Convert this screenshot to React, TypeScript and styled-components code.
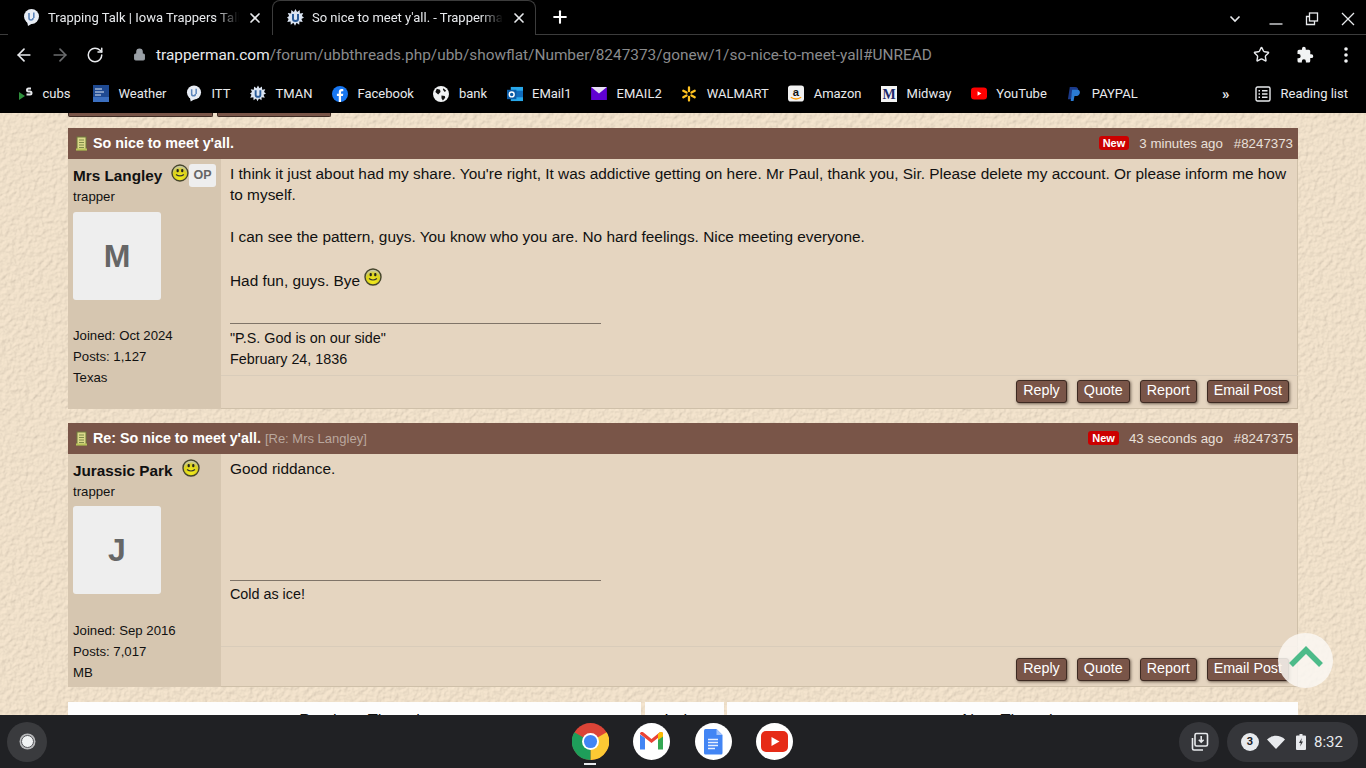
import styled, { createGlobalStyle } from 'styled-components';
import { ReactNode } from 'react';
import { ArrowLeft, ArrowRight, RotateCw, Star, Lock, X, Plus } from 'lucide-react';

const texture = `url("data:image/svg+xml,%3Csvg xmlns='http://www.w3.org/2000/svg' width='320' height='320'%3E%3Cfilter id='n' x='0' y='0' width='100%25' height='100%25'%3E%3CfeTurbulence type='fractalNoise' baseFrequency='0.22' numOctaves='4' seed='7' stitchTiles='stitch'/%3E%3CfeDiffuseLighting lighting-color='%23ffffff' surfaceScale='0.9' diffuseConstant='1'%3E%3CfeDistantLight azimuth='45' elevation='68'/%3E%3C/feDiffuseLighting%3E%3C/filter%3E%3Crect width='320' height='320' filter='url(%23n)'/%3E%3C/svg%3E")`;

const GlobalStyle = createGlobalStyle`
  html, body {
    margin: 0;
    padding: 0;
    height: 100%;
    overflow: hidden;
    font-family: "Liberation Sans", Arial, sans-serif;
  }
`;

const Shell = styled.div`
  width: 1366px;
  height: 768px;
  display: flex;
  flex-direction: column;
  overflow: hidden;
  position: relative;
`;

/* browser chrome */
const TabStrip = styled.div`
  height: 35px;
  flex: none;
  box-sizing: border-box;
  background: #000;
  border-bottom: 1px solid #3c3c3c;
  display: flex;
  align-items: stretch;
  padding-left: 8px;
  font-family: Roboto, sans-serif;
`;

const Tab = styled.div<{ $active?: boolean }>`
  width: 264px;
  height: 36px;
  box-sizing: border-box;
  display: flex;
  align-items: center;
  gap: 8px;
  padding: 0 8px 1px 14px;
  background: #000;
  color: #e8eaed;
  font-size: 13px;
  border: ${(p) => (p.$active ? '1px solid #3c3c3c' : '1px solid transparent')};
  border-bottom: ${(p) => (p.$active ? '1px solid #000' : '1px solid transparent')};
  border-radius: 8px 8px 0 0;
`;

const TabTitle = styled.span`
  flex: 1;
  white-space: nowrap;
  overflow: hidden;
  mask-image: linear-gradient(to right, #000 88%, transparent 100%);
`;

const NewTab = styled.div`
  display: flex;
  align-items: center;
  margin-left: 14px;
  color: #fff;
`;

const WindowControls = styled.div`
  margin-left: auto;
  display: flex;
  align-items: center;
  gap: 22px;
  padding: 3px 11px 0 0;
`;

const WindowButton = styled.svg<{ $after?: number }>`
  width: 14px;
  height: 14px;
  fill: none;
  stroke: #e8eaed;
  stroke-width: 1.3;
  margin-right: ${(p) => p.$after ?? 0}px;
`;

const Toolbar = styled.div`
  height: 39px;
  flex: none;
  background: #000;
  display: flex;
  align-items: center;
  padding-left: 14px;
  color: #e8eaed;
  font-family: Roboto, sans-serif;
`;

const NavIcons = styled.div`
  display: flex;
  align-items: center;
  gap: 16px;
`;

const Url = styled.div`
  display: flex;
  align-items: center;
  margin-left: 29px;
  font-size: 15.39px;
  color: #8a8b8d;
  white-space: nowrap;
  b {
    font-weight: 400;
    color: #e8eaed;
  }
  svg {
    margin-right: 10px;
    color: #9aa0a6;
  }
`;

const ToolbarRight = styled.div`
  margin-left: auto;
  display: flex;
  align-items: center;
  gap: 26px;
  padding-right: 18px;
  svg:last-child {
    margin-left: 4px;
  }
`;

const Bookmarks = styled.div`
  height: 39px;
  flex: none;
  background: #000;
  display: flex;
  align-items: center;
  padding-left: 17px;
  gap: 19.5px;
  color: #e8eaed;
  font-size: 13px;
  font-family: Roboto, sans-serif;
`;

const Bookmark = styled.div`
  display: flex;
  align-items: center;
  gap: 9.5px;
  white-space: nowrap;
  &:first-child {
    margin-right: 3px;
  }
`;

const BookmarkIcon = styled.span`
  width: 16px;
  height: 17px;
  display: flex;
  align-items: center;
  justify-content: center;
`;

const BookmarksEnd = styled.div`
  margin-left: auto;
  display: flex;
  align-items: center;
  padding-right: 18px;
  gap: 10px;
`;

const More = styled.span`
  margin-right: 15px;
  font-size: 15px;
  font-weight: 700;
`;

/* forum page */
const Page = styled.main`
  flex: 1;
  min-height: 0;
  overflow: hidden;
  background-color: #f7e7d0;
  background-image: ${texture};
  background-blend-mode: multiply;
  padding: 0 68px;
  font-size: 15.4px;
  color: #111;
`;

const TopSliver = styled.div`
  display: flex;
  gap: 4px;
  height: 4px;
  margin-bottom: 11px;
`;

const SliverButton = styled.div<{ $width: number }>`
  width: ${(p) => p.$width}px;
  box-sizing: border-box;
  background: #795548;
  border: 1px solid #3d2a22;
  border-top: 0;
  border-radius: 0 0 2px 2px;
`;

const Post = styled.article`
  margin-bottom: 14px;
  background: #e5d5c0;
  box-shadow: inset -1px -1px 0 #cfc0a9;
`;

const PostHeader = styled.header`
  height: 31px;
  box-sizing: border-box;
  padding: 0 5px 0 7px;
  background: #795548;
  color: #fff;
  display: flex;
  align-items: center;
  font-size: 13.3px;
`;

const PostTitle = styled.strong`
  font-size: 14.3px;
  margin: 0 0 2px 5px;
`;

const ReplyTo = styled.span`
  color: #b9a79d;
  font-size: 13px;
  margin: 0 0 1px 4px;
`;

const NewBadge = styled.span`
  margin-left: auto;
  background: #cc0000;
  color: #fff;
  font-weight: 700;
  font-size: 11px;
  line-height: 14px;
  padding: 0 4px;
  border-radius: 3px;
  margin-top: -2px;
`;

const PostTime = styled.span`
  margin-left: 10px;
  color: #e9e0da;
`;

const PostNumber = styled.span`
  margin-left: 11px;
  color: #e9e0da;
`;

const PostBody = styled.div`
  display: flex;
`;

const Sidebar = styled.aside<{ $bottom: number }>`
  width: 153px;
  flex: none;
  box-sizing: border-box;
  padding: 4px 5px ${(p) => p.$bottom}px;
  background: #d6c6b0;
  font-size: 13.2px;
  line-height: 21px;
`;

const NameRow = styled.div`
  display: flex;
  align-items: flex-start;
  height: 23px;
  box-sizing: border-box;
  padding-top: 1px;
`;

const UserName = styled.strong`
  font-size: 15.3px;
  line-height: 24px;
  margin-right: 9px;
  white-space: nowrap;
`;

const OpBadge = styled.span`
  background: #eee;
  color: #666;
  font-weight: 700;
  font-size: 12.5px;
  line-height: 23px;
  width: 27px;
  text-align: center;
  border-radius: 3px;
`;

const Avatar = styled.div<{ $top: number }>`
  width: 88px;
  height: 88px;
  margin-top: ${(p) => p.$top}px;
  background: #eee;
  border-radius: 3px;
  color: #666;
  font-weight: 700;
  font-size: 32px;
  display: flex;
  align-items: center;
  justify-content: center;
`;

const UserStats = styled.div<{ $top: number }>`
  margin-top: ${(p) => p.$top}px;
`;

const PostMain = styled.div`
  flex: 1;
  min-width: 0;
  display: flex;
  flex-direction: column;
`;

const Message = styled.div<{ $height: number }>`
  height: ${(p) => p.$height}px;
  box-sizing: border-box;
  padding: 4px 9px 0;
  line-height: 21px;
`;

const MessageLine = styled.div<{ $after?: number }>`
  margin-bottom: ${(p) => p.$after ?? 0}px;
`;

const InlineSmiley = styled.span`
  svg {
    vertical-align: 0;
    margin-top: -4px;
  }
`;

const Signature = styled.div<{ $top: number }>`
  margin: 0 9px;
  width: 371px;
  border-top: 1px solid #7f7468;
  padding-top: ${(p) => p.$top}px;
  font-size: 14.35px;
  line-height: 21px;
  white-space: nowrap;
`;

const PostFooter = styled.footer<{ $top: number }>`
  margin-top: auto;
  border-top: 1px solid #d9ccba;
  display: flex;
  justify-content: flex-end;
  gap: 10px;
  padding: ${(p) => p.$top}px 9px 6px 0;
`;

const ActionButton = styled.button`
  height: 23px;
  box-sizing: border-box;
  padding: 0 6px 2px;
  background: #795548;
  color: #fff;
  border: 1px solid #3d2a22;
  border-radius: 3px;
  box-shadow: 1px 1px 3px rgba(40, 25, 15, 0.6);
  font-family: inherit;
  font-size: 14.3px;
  line-height: 19px;
`;

const ThreadNav = styled.nav`
  display: grid;
  grid-template-columns: 573px 80px 571px;
  column-gap: 3px;
  margin-top: 15px;
`;

const NavCell = styled.div`
  background: #fdfdfd;
  height: 60px;
  text-align: center;
  padding-top: 9px;
  box-sizing: border-box;
  font-size: 16.5px;
  &:nth-child(2) {
    margin-left: 1px;
  }
`;

const ScrollTop = styled.div`
  position: absolute;
  left: 1278px;
  top: 633px;
  width: 55px;
  height: 55px;
  border-radius: 50%;
  background: rgba(250, 247, 242, 0.86);
  display: flex;
  align-items: center;
  justify-content: center;
  svg {
    margin-bottom: 8px;
  }
`;

/* chromeos shelf */
const Shelf = styled.div`
  height: 53px;
  flex: none;
  background: #202124;
  display: grid;
  grid-template-columns: 1fr auto 1fr;
  align-items: center;
  padding: 0 8px 0 7px;
`;

const Launcher = styled.div`
  width: 40px;
  height: 40px;
  border-radius: 50%;
  background: #3a3b3e;
  display: flex;
  align-items: center;
  justify-content: center;
`;

const LauncherDot = styled.div`
  width: 11px;
  height: 11px;
  border-radius: 50%;
  background: #f1f3f4;
  border: 1.5px solid #55565a;
  box-shadow: 0 0 0 1.5px #b9babc;
`;

const Apps = styled.div`
  display: flex;
  gap: 24.5px;
`;

const AppIcon = styled.div<{ $active?: boolean }>`
  width: 37px;
  height: 37px;
  position: relative;
  &::after {
    content: '';
    display: ${(p) => (p.$active ? 'block' : 'none')};
    position: absolute;
    left: 12px;
    bottom: -5px;
    width: 12px;
    height: 2px;
    background: #e8eaed;
  }
`;

const Tray = styled.div`
  justify-self: end;
  display: flex;
  align-items: center;
  gap: 8px;
`;

const CaptureButton = styled.div`
  width: 40px;
  height: 40px;
  border-radius: 50%;
  background: #35363a;
  display: flex;
  align-items: center;
  justify-content: center;
`;

const StatusPill = styled.div`
  height: 40px;
  width: 131px;
  box-sizing: border-box;
  border-radius: 20px;
  background: #35363a;
  display: flex;
  align-items: center;
  padding-left: 14px;
  gap: 8px;
  color: #e8eaed;
  font-family: Roboto, sans-serif;
  font-size: 15px;
  svg:last-of-type {
    margin-left: 3px;
  }
`;

const CountBadge = styled.span`
  width: 18px;
  height: 18px;
  border-radius: 50%;
  background: #e8eaed;
  color: #202124;
  font-size: 11px;
  font-weight: 700;
  display: flex;
  align-items: center;
  justify-content: center;
`;

/* drawings */
const Smiley = () => (
  <svg width="18" height="18" viewBox="0 0 18 18">
    <defs>
      <radialGradient id="smileyFill" cx="50%" cy="75%" r="65%">
        <stop offset="0%" stopColor="#f2ec1e" />
        <stop offset="70%" stopColor="#d9d01c" />
        <stop offset="100%" stopColor="#c9c9a0" />
      </radialGradient>
    </defs>
    <circle cx="9" cy="9" r="8" fill="url(#smileyFill)" stroke="#45452c" strokeWidth="1.4" />
    <rect x="5.6" y="5" width="2.2" height="3.2" rx="1" fill="#222" />
    <rect x="10.2" y="5" width="2.2" height="3.2" rx="1" fill="#222" />
    <path d="M5 10.5 Q9 13.5 13 10.5" fill="none" stroke="#333" strokeWidth="1.2" />
  </svg>
);

const ScrollIcon = () => (
  <svg width="13" height="15" viewBox="0 0 13 15">
    <rect x="2" y="1" width="9" height="13" fill="#dbd98a" stroke="#6f7a3a" />
    <path d="M4 4h5M4 6.500h5M4 9h5M4 11.500h5" stroke="#7d8a48" />
    <rect x="1" y="12.500" width="11" height="2" fill="#b9c45a" />
  </svg>
);

const BubbleIcon = () => (
  <svg width="17" height="17" viewBox="0 0 17 17">
    <circle cx="8.500" cy="7.500" r="7.500" fill="#e8edf5" />
    <path d="M4 12l1 5 5-3z" fill="#e8edf5" />
    <path d="M6 4v5a2 2 0 0 0 4 0M10.800 3.500v5.500" fill="none" stroke="#5d86bb" strokeWidth="1.600" />
  </svg>
);

const BurstIcon = () => (
  <svg width="17" height="17" viewBox="0 0 17 17">
    <path d="M8.500 0l1.600 3 2.600-2 .2 3.400 3.300-.5-1.300 3L17 8.500l-2.600 1.400 1.300 3-3.300-.4-.2 3.300-2.600-2-1.600 3-1.600-3-2.600 2-.2-3.300-3.300.4 1.300-3L0 8.500l2.100-1.600-1.300-3 3.300.5.2-3.400 2.600 2z" fill="#dbe5f3" />
    <path d="M6 5v5a2.500 2 0 0 0 5 0V5" fill="none" stroke="#2a5c9a" strokeWidth="2" />
  </svg>
);

const CubsIcon = () => (
  <svg width="15" height="14" viewBox="0 0 15 14">
    <path d="M1 5l6 4-6 4z" fill="#2f8f3c" />
    <path d="M13 1.500H10.500a1.500 1.500 0 0 0 0 3H12a1.500 1.500 0 0 1 0 3H8.500" fill="none" stroke="#e8eaed" strokeWidth="2" />
  </svg>
);

const WeatherIcon = () => (
  <svg width="16" height="17" viewBox="0 0 16 17">
    <rect width="16" height="17" fill="#1f4a92" />
    <rect y="12" width="16" height="5" fill="#3b6fc0" />
    <path d="M2 4h7M2 7h9M2 10h6" stroke="#dfe8f5" />
  </svg>
);

const FacebookIcon = () => (
  <svg width="16" height="16" viewBox="0 0 17 17">
    <circle cx="8.500" cy="8.500" r="8.500" fill="#1877f2" />
    <path d="M9.600 17v-6.300h2l.4-2.400H9.600V6.800c0-.8.3-1.200 1.200-1.200H12V3.500c-.5-.1-1.100-.2-1.800-.2-1.900 0-3 1.100-3 3.100v1.900H5.200v2.400h2V17z" fill="#fff" />
  </svg>
);

const GlobeIcon = () => (
  <svg width="16" height="16" viewBox="0 0 17 17">
    <circle cx="8.500" cy="8.500" r="8.500" fill="#f1f3f4" />
    <path d="M4 3l3.500 1 .5 2.500L5.500 9 2.500 6.500zM9 10l3.500.5.5 2L10.500 15.500 9 13zM11 2.500l3 2.500-1.500 1.500L10.500 4z" fill="#111" />
  </svg>
);

const OutlookIcon = () => (
  <svg width="16" height="16" viewBox="0 0 17 17">
    <rect x="4" y="1" width="13" height="15" fill="#28a8ea" />
    <rect x="9" y="5" width="8" height="7" fill="#0f6cbd" />
    <rect y="4" width="10" height="10" fill="#0a5ca8" />
    <circle cx="5" cy="9" r="2.600" fill="none" stroke="#fff" strokeWidth="1.500" />
  </svg>
);

const YahooMailIcon = () => (
  <svg width="16" height="13" viewBox="0 0 17 14">
    <rect width="17" height="14" fill="#6001d2" />
    <path d="M0 0h17L8.500 7z" fill="#e8e0f5" />
  </svg>
);

const WalmartIcon = () => (
  <svg width="16" height="16" viewBox="0 0 17 17">
    <g stroke="#ffc220" strokeWidth="2.400" strokeLinecap="round">
      <path d="M8.500 1.500v4M8.500 11.500v4M2.400 5l3.500 2M11.100 10l3.500 2M2.400 12l3.500-2M11.100 7l3.500-2" />
    </g>
  </svg>
);

const AmazonIcon = () => (
  <svg width="16" height="17" viewBox="0 0 17 17">
    <rect width="17" height="17" rx="3" fill="#f1f1f1" />
    <text x="8.500" y="11" textAnchor="middle" fontFamily="Liberation Sans" fontWeight="700" fontSize="12" fill="#111">a</text>
    <path d="M3 12.500q5.500 3.500 11 0" fill="none" stroke="#f90" strokeWidth="1.500" />
  </svg>
);

const MidwayIcon = () => (
  <svg width="16" height="16" viewBox="0 0 16 16">
    <rect width="16" height="16" fill="#f4f4f4" />
    <text x="8" y="13" textAnchor="middle" fontFamily="Liberation Serif" fontWeight="700" fontSize="14" fill="#1d2a6b">M</text>
  </svg>
);

const YouTubeIcon = () => (
  <svg width="16" height="13" viewBox="0 0 17 13">
    <rect width="17" height="13" rx="3.500" fill="#f00" />
    <path d="M7 4l4 2.500L7 9z" fill="#fff" />
  </svg>
);

const PaypalIcon = () => (
  <svg width="14" height="16" viewBox="0 0 15 17">
    <path d="M3 1h5.500c3 0 4 2 3.400 4-.7 2.400-2.700 3.200-4.700 3.200H5.500L4.300 14H1z" fill="#1b3a8a" />
    <path d="M5.500 4h5.300c2.600 0 3.400 1.800 2.900 3.600-.6 2.200-2.400 3-4.200 3H8L7 16H4z" fill="#2a7bd4" />
  </svg>
);

const ReadingListIcon = () => (
  <svg width="16" height="16" viewBox="0 0 16 16" fill="none" stroke="#e8eaed" strokeWidth="1.400">
    <rect x="1" y="1" width="14" height="14" rx="1.500" />
    <path d="M3.500 4.800h1.500M7 4.800h5.500M3.500 8h1.500M7 8h5.500M3.500 11.200h1.500M7 11.200h5.500" />
  </svg>
);

const PuzzleIcon = () => (
  <svg width="18" height="18" viewBox="0 0 24 24" fill="#f1f3f4">
    <path d="M20.500 11H19V7a2 2 0 0 0-2-2h-4V3.500a2.500 2.500 0 0 0-5 0V5H4a2 2 0 0 0-2 2v3.800h1.500a2.700 2.700 0 0 1 0 5.400H2V20a2 2 0 0 0 2 2h3.800v-1.500a2.700 2.700 0 0 1 5.400 0V22H17a2 2 0 0 0 2-2v-4h1.500a2.500 2.500 0 0 0 0-5z" />
  </svg>
);

const DotsIcon = () => (
  <svg width="4" height="16" viewBox="0 0 4 16" fill="#f1f3f4">
    <circle cx="2" cy="2" r="1.800" />
    <circle cx="2" cy="8" r="1.800" />
    <circle cx="2" cy="14" r="1.800" />
  </svg>
);

const ChromeIcon = () => (
  <svg width="37" height="37" viewBox="0 0 48 48">
    <circle cx="24" cy="24" r="24" fill="#db4437" />
    <path d="M24 24 L45 12 A24 24 0 0 1 24 48 Z" fill="#fcc934" />
    <path d="M24 24 L24 48 A24 24 0 0 1 3 12 Z" fill="#1e9e5a" />
    <circle cx="24" cy="24" r="11" fill="#fff" />
    <circle cx="24" cy="24" r="8.500" fill="#4285f4" />
  </svg>
);

const GmailIcon = () => (
  <svg width="37" height="37" viewBox="0 0 37 37">
    <circle cx="18.500" cy="18.500" r="18.500" fill="#fff" />
    <path d="M7 11.500v15h5V15z" fill="#4285f4" />
    <path d="M30 11.500v15h-5V15z" fill="#34a853" />
    <path d="M7 11c0-2 2-2.500 3.500-1.500L18.500 16l8-6.500c1.500-1 3.500-.5 3.500 1.500l-11.500 9z" fill="#ea4335" />
    <path d="M26.500 9.500c1.500-1 3.500-.5 3.500 1.500v2.500l-5 3.500V11z" fill="#fbbc04" />
  </svg>
);

const DocsIcon = () => (
  <svg width="37" height="37" viewBox="0 0 37 37">
    <circle cx="18.500" cy="18.500" r="18.500" fill="#fff" />
    <path d="M10.500 6h11l6 6v18a1.500 1.500 0 0 1-1.500 1.500H10.500A1.500 1.500 0 0 1 9 30V7.500A1.500 1.500 0 0 1 10.500 6z" fill="#4285f4" />
    <path d="M21.500 6l6 6h-6z" fill="#a1c2fa" />
    <path d="M13 16.500h10M13 19.500h10M13 22.500h10M13 25.500h7" stroke="#e8f0fe" strokeWidth="1.500" />
  </svg>
);

const YouTubeApp = () => (
  <svg width="37" height="37" viewBox="0 0 37 37">
    <circle cx="18.500" cy="18.500" r="18.500" fill="#fff" />
    <rect x="5" y="8" width="27" height="21" rx="5" fill="#e62b17" />
    <path d="M15.500 14l8 4.500-8 4.500z" fill="#fff" />
  </svg>
);

const CaptureIcon = () => (
  <svg width="20" height="20" viewBox="0 0 20 20" fill="none" stroke="#e8eaed" strokeWidth="1.600">
    <rect x="6" y="1.500" width="12.500" height="12.500" rx="1.500" />
    <path d="M12.200 4v6M9.800 7.800l2.400 2.400 2.400-2.400" />
    <path d="M3.500 6v10.500a1.500 1.500 0 0 0 1.500 1.500H14" />
  </svg>
);

const WifiIcon = () => (
  <svg width="18" height="14" viewBox="0 0 18 14">
    <path d="M0 4.500C5-.5 13-.5 18 4.500L9 14z" fill="#e8eaed" />
  </svg>
);

const BatteryIcon = () => (
  <svg width="10" height="16" viewBox="0 0 10 16">
    <path d="M3.500 0h3v1.500H9a1 1 0 0 1 1 1V15a1 1 0 0 1-1 1H1a1 1 0 0 1-1-1V2.500a1 1 0 0 1 1-1h2.500z" fill="#e8eaed" />
    <path d="M5.800 4L3 9h1.800l-.6 3.500L7 7.500H5.200z" fill="#35363a" />
  </svg>
);

const bookmarks: { label: string; icon: ReactNode }[] = [
  { label: 'cubs', icon: <CubsIcon /> },
  { label: 'Weather', icon: <WeatherIcon /> },
  { label: 'ITT', icon: <BubbleIcon /> },
  { label: 'TMAN', icon: <BurstIcon /> },
  { label: 'Facebook', icon: <FacebookIcon /> },
  { label: 'bank', icon: <GlobeIcon /> },
  { label: 'EMail1', icon: <OutlookIcon /> },
  { label: 'EMAIL2', icon: <YahooMailIcon /> },
  { label: 'WALMART', icon: <WalmartIcon /> },
  { label: 'Amazon', icon: <AmazonIcon /> },
  { label: 'Midway', icon: <MidwayIcon /> },
  { label: 'YouTube', icon: <YouTubeIcon /> },
  { label: 'PAYPAL', icon: <PaypalIcon /> },
];

const actions = ['Reply', 'Quote', 'Report', 'Email Post'];

const Actions = ({ top }: { top: number }) => (
  <PostFooter $top={top}>
    {actions.map((a) => (
      <ActionButton key={a}>{a}</ActionButton>
    ))}
  </PostFooter>
);

const App = () => {
  return (
    <Shell>
      <GlobalStyle />
      <TabStrip>
        <Tab>
          <BubbleIcon />
          <TabTitle>Trapping Talk | Iowa Trappers Talk</TabTitle>
          <X size={16} strokeWidth={2.5} />
        </Tab>
        <Tab $active>
          <BurstIcon />
          <TabTitle>So nice to meet y'all. - Trapperman Forums</TabTitle>
          <X size={16} strokeWidth={2.5} />
        </Tab>
        <NewTab>
          <Plus size={20} strokeWidth={2.5} />
        </NewTab>
        <WindowControls>
          <WindowButton viewBox="0 0 14 14" $after={5}>
            <path d="M2.500 4.500L7 9l4.500-4.500" strokeWidth="1.600" />
          </WindowButton>
          <WindowButton viewBox="0 0 14 14">
            <path d="M0.500 12H13.500" />
          </WindowButton>
          <WindowButton viewBox="0 0 14 14">
            <rect x="4.500" y="1" width="8" height="8" />
            <path d="M4.500 4.500H1.500V12.500H9.500V9" />
          </WindowButton>
          <WindowButton viewBox="0 0 14 14">
            <path d="M1 1L13 13M13 1L1 13" />
          </WindowButton>
        </WindowControls>
      </TabStrip>
      <Toolbar>
        <NavIcons>
          <ArrowLeft size={20} />
          <ArrowRight size={20} color="#6b6c6e" />
          <RotateCw size={18} />
        </NavIcons>
        <Url>
          <Lock size={13} fill="#9aa0a6" />
          <b>trapperman.com</b>/forum/ubbthreads.php/ubb/showflat/Number/8247373/gonew/1/so-nice-to-meet-yall#UNREAD
        </Url>
        <ToolbarRight>
          <Star size={17} />
          <PuzzleIcon />
          <DotsIcon />
        </ToolbarRight>
      </Toolbar>
      <Bookmarks>
        {bookmarks.map((b) => (
          <Bookmark key={b.label}>
            <BookmarkIcon>{b.icon}</BookmarkIcon>
            {b.label}
          </Bookmark>
        ))}
        <BookmarksEnd>
          <More>»</More>
          <ReadingListIcon />
          Reading list
        </BookmarksEnd>
      </Bookmarks>
      <Page>
        <TopSliver>
          <SliverButton $width={145} />
          <SliverButton $width={114} />
        </TopSliver>
        <Post>
          <PostHeader>
            <ScrollIcon />
            <PostTitle>So nice to meet y'all.</PostTitle>
            <NewBadge>New</NewBadge>
            <PostTime>3 minutes ago</PostTime>
            <PostNumber>#8247373</PostNumber>
          </PostHeader>
          <PostBody>
            <Sidebar $bottom={21}>
              <NameRow>
                <UserName>Mrs Langley</UserName>
                <Smiley />
                <OpBadge>OP</OpBadge>
              </NameRow>
              <div>trapper</div>
              <Avatar $top={5}>M</Avatar>
              <UserStats $top={25}>
                Joined: Oct 2024
                <br />
                Posts: 1,127
                <br />
                Texas
              </UserStats>
            </Sidebar>
            <PostMain>
              <Message $height={164}>
                <MessageLine $after={21}>
                  I think it just about had my share. You're right, It was addictive getting on here. Mr Paul, thank you, Sir. Please delete my account. Or please inform me how to myself.
                </MessageLine>
                <MessageLine $after={23}>
                  I can see the pattern, guys. You know who you are. No hard feelings. Nice meeting everyone.
                </MessageLine>
                <MessageLine>
                  Had fun, guys. Bye{' '}
                  <InlineSmiley>
                    <Smiley />
                  </InlineSmiley>
                </MessageLine>
              </Message>
              <Signature $top={4}>
                "P.S. God is on our side"
                <br />
                February 24, 1836
              </Signature>
              <Actions top={4} />
            </PostMain>
          </PostBody>
        </Post>
        <Post>
          <PostHeader>
            <ScrollIcon />
            <PostTitle>Re: So nice to meet y'all.</PostTitle>
            <ReplyTo>[Re: Mrs Langley]</ReplyTo>
            <NewBadge>New</NewBadge>
            <PostTime>43 seconds ago</PostTime>
            <PostNumber>#8247375</PostNumber>
          </PostHeader>
          <PostBody>
            <Sidebar $bottom={4}>
              <NameRow>
                <UserName>Jurassic Park</UserName>
                <Smiley />
              </NameRow>
              <div>trapper</div>
              <Avatar $top={4}>J</Avatar>
              <UserStats $top={26}>
                Joined: Sep 2016
                <br />
                Posts: 7,017
                <br />
                MB
              </UserStats>
            </Sidebar>
            <PostMain>
              <Message $height={126}>
                <MessageLine>Good riddance.</MessageLine>
              </Message>
              <Signature $top={3}>Cold as ice!</Signature>
              <Actions top={11} />
            </PostMain>
          </PostBody>
        </Post>
        <ThreadNav>
          <NavCell>‹ Previous Thread</NavCell>
          <NavCell>Index</NavCell>
          <NavCell>Next Thread ›</NavCell>
        </ThreadNav>
      </Page>
      <Shelf>
        <Launcher>
          <LauncherDot />
        </Launcher>
        <Apps>
          <AppIcon $active>
            <ChromeIcon />
          </AppIcon>
          <AppIcon>
            <GmailIcon />
          </AppIcon>
          <AppIcon>
            <DocsIcon />
          </AppIcon>
          <AppIcon>
            <YouTubeApp />
          </AppIcon>
        </Apps>
        <Tray>
          <CaptureButton>
            <CaptureIcon />
          </CaptureButton>
          <StatusPill>
            <CountBadge>3</CountBadge>
            <WifiIcon />
            <BatteryIcon />
            <span>8:32</span>
          </StatusPill>
        </Tray>
      </Shelf>
      <ScrollTop>
        <svg width="34" height="22" viewBox="0 0 34 22" fill="none">
          <path d="M2 19 L17 4 L32 19" stroke="#4dbb89" strokeWidth="5.500" />
        </svg>
      </ScrollTop>
    </Shell>
  );
};

export default App;
